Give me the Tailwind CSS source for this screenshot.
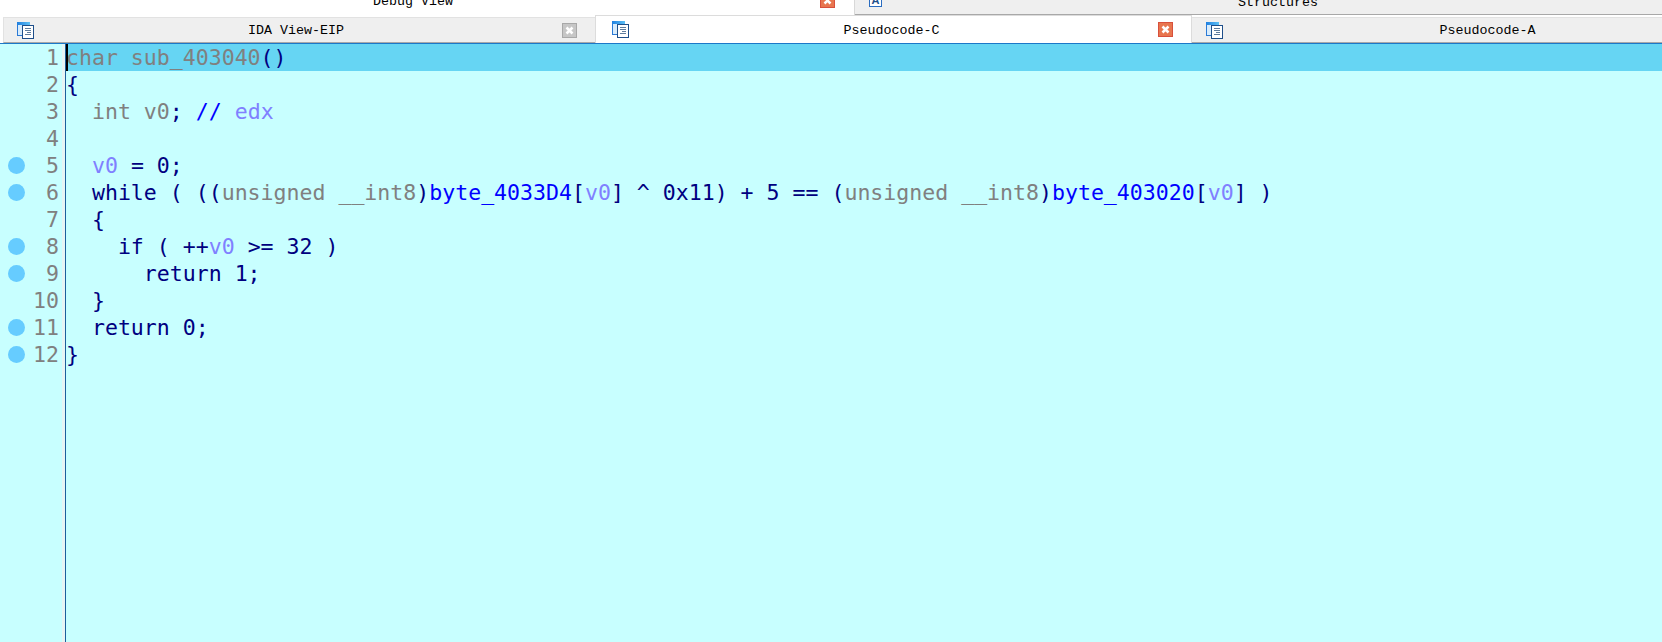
<!DOCTYPE html>
<html lang="en">
<head>
    <meta charset="utf-8">
    <title>Pseudocode-C</title>
    <script src="https://cdn.jsdelivr.net/npm/@tailwindcss/browser@4"></script>
</head>
<body class="w-[1662px] h-[642px] overflow-hidden bg-[#c8ffff]">

<!-- Upper tab row, cut off by the window edge -->
<div class="flex h-[15px] overflow-hidden font-['Liberation_Mono',monospace] text-[13.33px] leading-[15px] text-black">
    <div class="relative w-[855px] bg-white border-r border-[#d8d8d8] text-center">
        <span class="relative top-[-6px] left-[-14px]">Debug View</span>
        <svg class="absolute left-[820px] top-[-7px] w-[15px] h-[15px]" viewBox="0 0 15 15"><rect x="0.500" y="0.500" width="14" height="14" fill="#e8764f" stroke="#d8503c"/><path d="M4.500 4.500l6 6M10.500 4.500l-6 6" stroke="#fff" stroke-width="2.500"/></svg>
    </div>
    <div class="relative flex-1 bg-[#efefef] border-b border-[#a8a8a8]">
        <span class="absolute left-[14px] top-[-6px] w-[13px] h-[13px] bg-white border border-[#2a6cc0] text-[#1f4f8a] text-[11px] leading-[11px] text-center font-['Liberation_Sans',sans-serif] font-bold">A</span>
        <span class="absolute left-[383px] top-[-5px]">Structures</span>
    </div>
</div>

<!-- Lower tab row -->
<div class="flex h-[29px] overflow-hidden border-b border-[#1c78c8] font-['Liberation_Mono',monospace] text-[13.33px] text-black bg-white">
    <div class="flex items-center shrink-0 w-[592px] mt-[2px] ml-[3px] pl-[13px] pr-[18px] bg-[#efefef] border-t border-l border-b border-t-[#e2e2e2] border-l-[#e2e2e2] border-b-[#a8a8a8]">
        <svg class="w-[17px] h-[17px] shrink-0" viewBox="0 0 17 17"><defs><linearGradient id="bar" x1="0" x2="1" y1="0" y2="0"><stop offset="0" stop-color="#1f7fe0"/><stop offset="1" stop-color="#5cc0f5"/></linearGradient></defs><rect x="0.500" y="0.500" width="12" height="13" fill="#d8ecfc" stroke="#2b7ad6"/><rect x="0" y="0" width="13" height="3" fill="url(#bar)"/><rect x="5.500" y="3.500" width="11" height="13" fill="#fff" stroke="#1f4f8a"/><path d="M8 6.500h6M8 8.500h6M10 10.500h4M8 12.500h6" stroke="#5f7d9e"/></svg>
        <span class="flex-1 text-center pr-[4px] pt-[2px]">IDA View-EIP</span>
        <svg class="w-[15px] h-[15px] shrink-0" viewBox="0 0 15 15"><rect x="0.500" y="0.500" width="14" height="14" fill="#c6c6c6" stroke="#a8a8a8"/><path d="M4.500 4.500l6 6M10.500 4.500l-6 6" stroke="#fff" stroke-width="2.500"/></svg>
    </div>
    <div class="flex items-center shrink-0 w-[597px] pl-[16px] pr-[18px] bg-white border-x border-t border-[#dcdcdc]">
        <svg class="w-[17px] h-[17px] shrink-0" viewBox="0 0 17 17"><rect x="0.500" y="0.500" width="12" height="13" fill="#d8ecfc" stroke="#2b7ad6"/><rect x="0" y="0" width="13" height="3" fill="url(#bar)"/><rect x="5.500" y="3.500" width="11" height="13" fill="#fff" stroke="#1f4f8a"/><path d="M8 6.500h6M8 8.500h6M10 10.500h4M8 12.500h6" stroke="#5f7d9e"/></svg>
        <span class="flex-1 text-center pr-[4px] pt-[2px]">Pseudocode-C</span>
        <svg class="w-[15px] h-[15px] shrink-0" viewBox="0 0 15 15"><rect x="0.500" y="0.500" width="14" height="14" fill="#e8764f" stroke="#d8503c"/><path d="M4.500 4.500l6 6M10.500 4.500l-6 6" stroke="#fff" stroke-width="2.500"/></svg>
    </div>
    <div class="flex items-center shrink-0 w-[592px] mt-[2px] pl-[14px] pr-[32px] bg-[#efefef] border-t border-b border-t-[#e2e2e2] border-b-[#a8a8a8]">
        <svg class="w-[17px] h-[17px] shrink-0" viewBox="0 0 17 17"><rect x="0.500" y="0.500" width="12" height="13" fill="#d8ecfc" stroke="#2b7ad6"/><rect x="0" y="0" width="13" height="3" fill="url(#bar)"/><rect x="5.500" y="3.500" width="11" height="13" fill="#fff" stroke="#1f4f8a"/><path d="M8 6.500h6M8 8.500h6M10 10.500h4M8 12.500h6" stroke="#5f7d9e"/></svg>
        <span class="flex-1 text-center pt-[2px]">Pseudocode-A</span>
    </div>
</div>

<!-- Pseudocode listing -->
<div class="flex h-[598px] font-['DejaVu_Sans_Mono',monospace] text-[21.55px] leading-[27px] text-[#000080]">
    <!-- Gutter: breakpoint dots and line numbers -->
    <div class="w-[66px] shrink-0 border-r border-[#1c5f9c]">
        <div class="h-full border-r-[3px] border-[#e6f4f4] text-[#808080] text-right pr-[3px]">
            <div class="relative h-[27px]">1</div>
            <div class="relative h-[27px]">2</div>
            <div class="relative h-[27px]">3</div>
            <div class="relative h-[27px]">4</div>
            <div class="relative h-[27px]">5<span class="absolute left-[8px] top-[5px] w-[17px] h-[17px] rounded-full bg-[#66ccff]"></span></div>
            <div class="relative h-[27px]">6<span class="absolute left-[8px] top-[5px] w-[17px] h-[17px] rounded-full bg-[#66ccff]"></span></div>
            <div class="relative h-[27px]">7</div>
            <div class="relative h-[27px]">8<span class="absolute left-[8px] top-[5px] w-[17px] h-[17px] rounded-full bg-[#66ccff]"></span></div>
            <div class="relative h-[27px]">9<span class="absolute left-[8px] top-[5px] w-[17px] h-[17px] rounded-full bg-[#66ccff]"></span></div>
            <div class="relative h-[27px]">10</div>
            <div class="relative h-[27px]">11<span class="absolute left-[8px] top-[5px] w-[17px] h-[17px] rounded-full bg-[#66ccff]"></span></div>
            <div class="relative h-[27px]">12<span class="absolute left-[8px] top-[5px] w-[17px] h-[17px] rounded-full bg-[#66ccff]"></span></div>
        </div>
    </div>
    <!-- Code lines -->
    <div class="flex-1">
        <div class="relative h-[27px] whitespace-pre bg-[#66d5f3]"><span class="absolute left-0 top-0 w-[2px] h-[27px] bg-black"></span><span class="text-[#808080]">char sub_403040</span>()</div>
        <div class="h-[27px] whitespace-pre">{</div>
        <div class="h-[27px] whitespace-pre">  <span class="text-[#808080]">int v0</span>; <span class="text-[#0000ff]">//</span> <span class="text-[#8080ff]">edx</span></div>
        <div class="h-[27px] whitespace-pre"></div>
        <div class="h-[27px] whitespace-pre">  <span class="text-[#8080ff]">v0</span> = 0;</div>
        <div class="h-[27px] whitespace-pre">  while ( ((<span class="text-[#808080]">unsigned __int8</span>)<span class="text-[#0000ff]">byte_4033D4</span>[<span class="text-[#8080ff]">v0</span>] ^ 0x11) + 5 == (<span class="text-[#808080]">unsigned __int8</span>)<span class="text-[#0000ff]">byte_403020</span>[<span class="text-[#8080ff]">v0</span>] )</div>
        <div class="h-[27px] whitespace-pre">  {</div>
        <div class="h-[27px] whitespace-pre">    if ( ++<span class="text-[#8080ff]">v0</span> &gt;= 32 )</div>
        <div class="h-[27px] whitespace-pre">      return 1;</div>
        <div class="h-[27px] whitespace-pre">  }</div>
        <div class="h-[27px] whitespace-pre">  return 0;</div>
        <div class="h-[27px] whitespace-pre">}</div>
    </div>
</div>

</body>
</html>
